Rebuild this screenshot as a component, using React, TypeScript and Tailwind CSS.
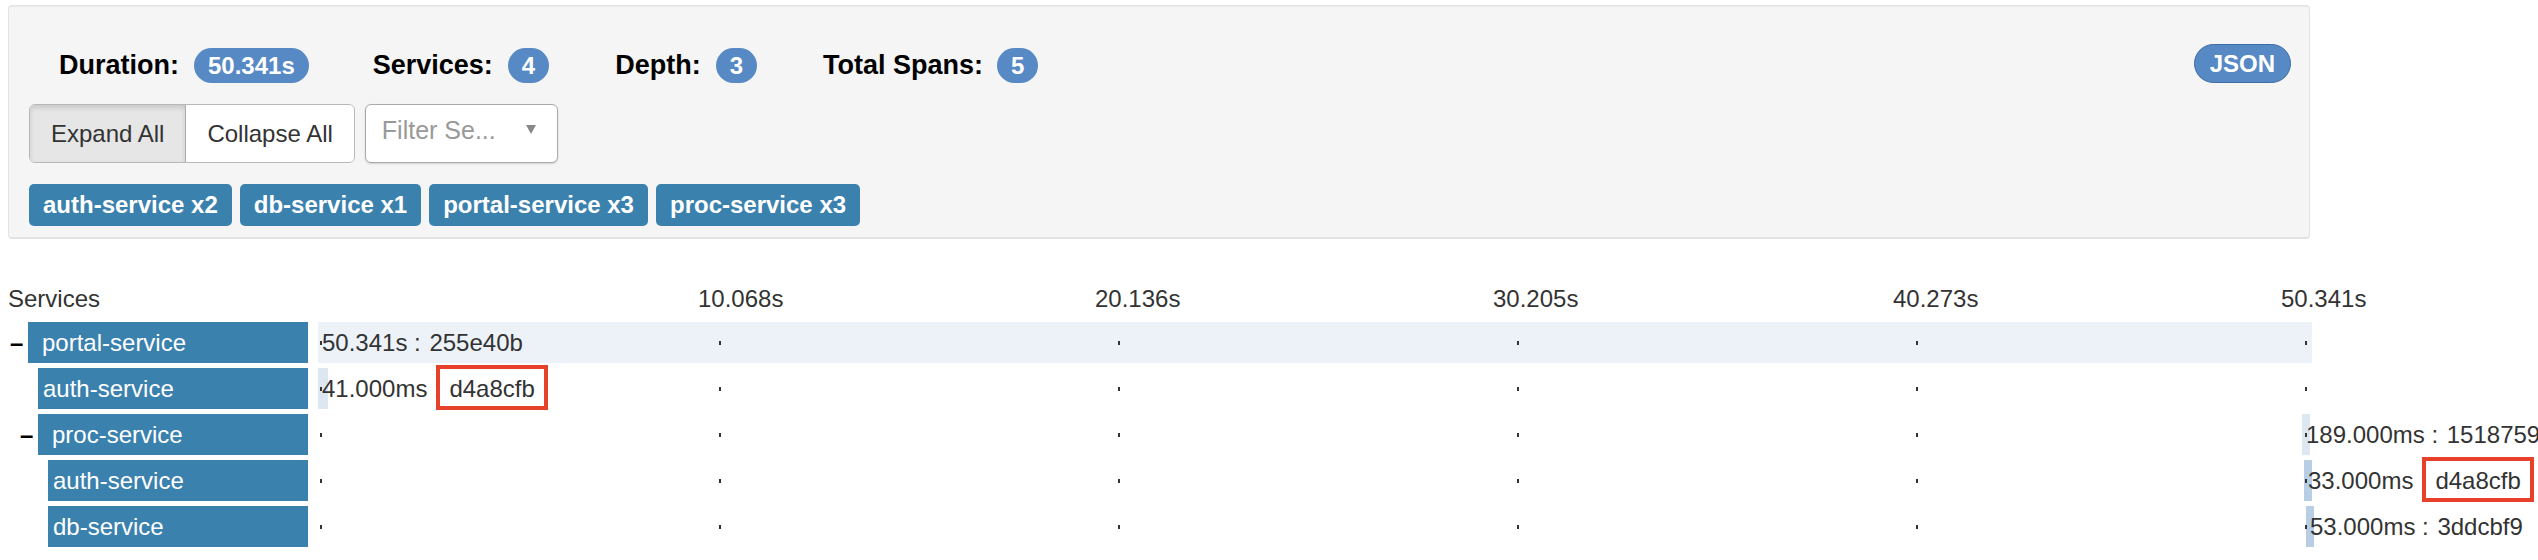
const ticks = [
  { label: "10.068s", x: 380 },
  { label: "20.136s", x: 777 },
  { label: "30.205s", x: 1175 },
  { label: "40.273s", x: 1575 },
  { label: "50.341s", x: 1963 },
];

// tick marks drawn in every row
const dots = [2, 401, 800, 1199, 1598, 1987];

const spans = [
  { name: "portal-service", indent: "pl-[10px]", toggle: true, left: 0, width: 1994, bar: "bg-[#edf2f9]", dur: "50.341s", id: "255e40b", mark: false },
  { name: "auth-service", indent: "pl-[38px]", toggle: false, left: 0, width: 10, bar: "bg-[#dce7f2]", dur: "41.000ms", id: "d4a8cfb", mark: true },
  { name: "proc-service", indent: "pl-[20px]", toggle: true, left: 1984, width: 8, bar: "bg-[#dce7f2]", dur: "189.000ms", id: "1518759", mark: false },
  { name: "auth-service", indent: "pl-[48px]", toggle: false, left: 1986, width: 8, bar: "bg-[#b7cee5]", dur: "33.000ms", id: "d4a8cfb", mark: true },
  { name: "db-service", indent: "pl-[48px]", toggle: false, left: 1988, width: 8, bar: "bg-[#b7cee5]", dur: "53.000ms", id: "3ddcbf9", mark: false },
];

const tags = ["auth-service x2", "db-service x1", "portal-service x3", "proc-service x3"];

function Badge({ children }: { children: React.ReactNode }) {
  return (
    <span className="h-[35px] px-[14px] rounded-full bg-[#5789c5] text-white text-[24px] font-bold leading-[35px]">
      {children}
    </span>
  );
}

export default function App() {
  return (
    <div className="w-[2538px] h-[560px] overflow-hidden bg-white font-['Liberation_Sans',Arial,sans-serif] text-[#333]">
      <div className="ml-[8px] mt-[5px] w-[2302px] border border-[#e3e3e3] border-b-2 rounded-[4px] bg-[#f5f5f5] shadow-[inset_0_1px_1px_rgba(0,0,0,0.05)] pl-[20px] pr-[18px] pb-[11px]">
        <div className="flex items-end mt-[38px]">
          <div className="flex items-center h-[35px] ml-[30px]">
            <span className="text-[27px] font-bold text-black mr-[15px]">Duration:</span>
            <Badge>50.341s</Badge>
          </div>
          <div className="flex items-center h-[35px] ml-[64px]">
            <span className="text-[27px] font-bold text-black mr-[15px]">Services:</span>
            <Badge>4</Badge>
          </div>
          <div className="flex items-center h-[35px] ml-[66px]">
            <span className="text-[27px] font-bold text-black mr-[15px]">Depth:</span>
            <Badge>3</Badge>
          </div>
          <div className="flex items-center h-[35px] ml-[66px]">
            <span className="text-[27px] font-bold text-black mr-[14px]">Total Spans:</span>
            <Badge>5</Badge>
          </div>
          <button className="ml-auto h-[39px] px-[15px] rounded-full bg-[#5789c5] border border-[#3d6da6] text-white text-[24px] font-bold leading-none">
            JSON
          </button>
        </div>

        <div className="flex mt-[21px] h-[59px]">
          <div className="flex rounded-[6px] border border-[#b8b8b8] overflow-hidden">
            <button className="px-[21px] bg-[#e6e6e6] text-[24px] text-[#333] shadow-[inset_0_3px_5px_rgba(0,0,0,0.125)] border-r border-[#adadad]">
              Expand All
            </button>
            <button className="px-[21px] bg-white text-[24px] text-[#333]">Collapse All</button>
          </div>
          <div className="ml-[10px] w-[193px] flex items-start pt-[11px] pl-[16px] pr-[21px] bg-white border border-[#aaa] rounded-[6px] shadow-[0_1px_2px_rgba(0,0,0,0.15)]">
            <span className="text-[25px] leading-[28px] text-[#999]">Filter Se...</span>
            <span className="ml-auto mt-[9px] w-0 h-0 border-l-[5px] border-r-[5px] border-t-[9px] border-l-transparent border-r-transparent border-t-[#888]" />
          </div>
        </div>

        <div className="flex gap-[8px] mt-[21px]">
          {tags.map((t) => (
            <span key={t} className="h-[42px] px-[14px] rounded-[5px] bg-[#3b81ae] text-white text-[24px] font-bold leading-[42px]">
              {t}
            </span>
          ))}
        </div>
      </div>

      <div className="mt-[46px]">
        <div className="flex h-[28px] text-[24px] leading-[28px]">
          <div className="w-[308px] shrink-0 pl-[8px]">Services</div>
          <div className="relative ml-[10px] w-[1994px] shrink-0">
            {ticks.map((t) => (
              <span key={t.label} className="absolute top-0" style={{ left: t.x }}>
                {t.label}
              </span>
            ))}
          </div>
        </div>

        <div className="mt-[9px]">
          {spans.map((s, i) => (
            <div key={i} className="flex h-[41px] mb-[5px]">
              <div className={`flex items-center w-[308px] shrink-0 ${s.indent}`}>
                {s.toggle && <span className="w-[13px] mr-[5px] text-[24px] font-bold text-black leading-none">–</span>}
                <div className={`flex-1 h-full flex items-center bg-[#3b81ae] text-white text-[24px] ${s.toggle ? "pl-[14px]" : "pl-[5px]"}`}>
                  {s.name}
                </div>
              </div>
              <div className="relative ml-[10px] w-[1994px] shrink-0 h-full">
                <div className={`absolute top-0 h-full ${s.bar}`} style={{ left: s.left, width: s.width }} />
                {dots.map((x) => (
                  <div key={x} className="absolute top-[19px] w-[2px] h-[4px] bg-[#333]" style={{ left: x }} />
                ))}
                <div className="absolute top-0 h-full whitespace-nowrap text-[24px] leading-[41px] text-[#333]" style={{ left: s.left + 4 }}>
                  {s.dur} :{" "}
                  <span className="relative inline-block ml-[2px]">
                    {s.id}
                    {s.mark && (
                      <span className="absolute -left-[13px] -right-[13px] -top-[3px] -bottom-[1px] border-4 border-[#e8412b]" />
                    )}
                  </span>
                </div>
              </div>
            </div>
          ))}
        </div>
      </div>
    </div>
  );
}
